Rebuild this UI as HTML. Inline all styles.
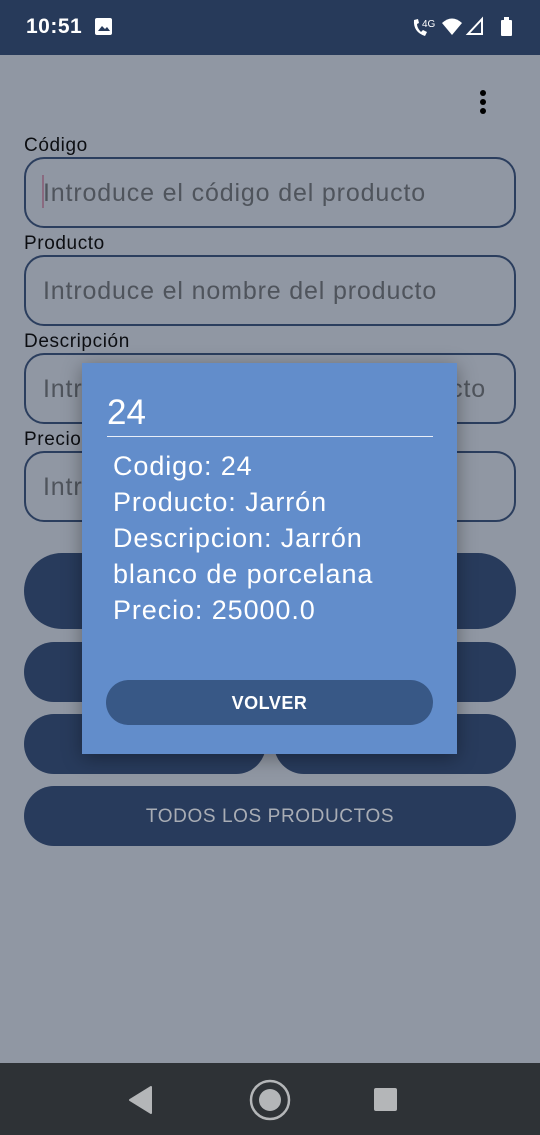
<!DOCTYPE html>
<html><head><meta charset="utf-8"><style>
*{margin:0;padding:0;box-sizing:border-box}
body{width:540px;height:1135px;background:#9097a3;position:relative;overflow:hidden;font-family:"Liberation Sans",sans-serif}
.a{position:absolute}
.sb{left:0;top:0;width:540px;height:55px;background:#273a5a}
.lbl{left:24px;font-size:19px;color:#0c0e12;letter-spacing:0.6px}
.inp{left:24px;width:492px;height:71px;border:2.5px solid #2b3e5e;border-radius:20px;font-size:25px;color:#4f545c;padding-left:17px;line-height:68px;white-space:nowrap;overflow:hidden;letter-spacing:0.85px}
.btn{background:#283b5c;border-radius:32px}
.nav{left:0;top:1063px;width:540px;height:72px;background:#2e3236}
.dlg{left:82px;top:363px;width:375px;height:391px;background:#628dcb;box-shadow:0 4px 18px rgba(0,0,0,.35)}
.dt{color:#fff;font-size:27px;line-height:36px;letter-spacing:0.9px}
</style></head><body>
<div class="a sb"></div>
<div class="a" style="left:26px;top:15px;color:#fff;font-size:21px;font-weight:bold;letter-spacing:0.5px">10:51</div>
<div class="a" style="left:95px;top:18px;width:17px;height:17px;background:#fff;border-radius:2px"></div>
<svg class="a" style="left:96px;top:24px" width="15" height="8"><path d="M2 7 L6 2 L9 5 L11 3 L14 7Z" fill="#273a5a"/></svg>
<svg class="a" style="left:410px;top:14px" width="110" height="26">
<path d="M4 6 Q3 18 15 22 L17 18 L13 16 L11 18 Q7 14 7 10 L9 9 L8 5Z" fill="#fff"/>
<text x="12" y="13" font-size="10" fill="#fff" font-family="Liberation Sans">4G</text>
<path d="M32 9 Q42 0 52 9 L42 21Z" fill="#fff"/>
<path d="M72 20 L72 5 L58 20Z" fill="none" stroke="#fff" stroke-width="2"/>
<rect x="91" y="6" width="11" height="16" rx="1" fill="#fff"/><rect x="94" y="3" width="5" height="3" fill="#fff"/>
</svg>
<div class="a" style="left:480px;top:90px;width:6px;height:6px;border-radius:3px;background:#000"></div>
<div class="a" style="left:480px;top:99px;width:6px;height:6px;border-radius:3px;background:#000"></div>
<div class="a" style="left:480px;top:108px;width:6px;height:6px;border-radius:3px;background:#000"></div>

<div class="a lbl" style="top:135px">Código</div>
<div class="a inp" style="top:157px">Introduce el código del producto</div>
<div class="a" style="left:42px;top:175px;width:2px;height:33px;background:#8a6a80"></div>
<div class="a lbl" style="top:233px">Producto</div>
<div class="a inp" style="top:255px">Introduce el nombre del producto</div>
<div class="a lbl" style="top:331px">Descripción</div>
<div class="a inp" style="top:353px">Intr<span style="position:absolute;right:28px">cto</span></div>
<div class="a lbl" style="top:429px">Precio</div>
<div class="a inp" style="top:451px">Introduce el precio</div>

<div class="a btn" style="left:24px;top:553px;width:492px;height:76px;border-radius:38px"></div>
<div class="a btn" style="left:24px;top:642px;width:492px;height:60px"></div>
<div class="a btn" style="left:24px;top:714px;width:242px;height:60px"></div>
<div class="a btn" style="left:274px;top:714px;width:242px;height:60px"></div>
<div class="a btn" style="left:24px;top:786px;width:492px;height:60px;color:#a9adb5;font-size:19px;text-align:center;line-height:62px;letter-spacing:0.6px">TODOS LOS PRODUCTOS</div>

<div class="a dlg">
<div class="a" style="left:25px;top:30px;color:#fff;font-size:35px">24</div>
<div class="a" style="left:25px;top:73px;width:326px;height:1px;background:#e8eef8"></div>
<div class="a dt" style="left:31px;top:85px">Codigo: 24<br>Producto: Jarrón<br>Descripcion: Jarrón<br>blanco de porcelana<br>Precio: 25000.0</div>
<div class="a" style="left:24px;top:317px;width:327px;height:45px;background:#385886;border-radius:23px;color:#fff;font-weight:bold;font-size:18px;text-align:center;line-height:47px;letter-spacing:0.5px">VOLVER</div>
</div>

<div class="a nav"></div>
<svg class="a" style="left:120px;top:1075px" width="300" height="50">
<path d="M10 25 L31 12 L31 38Z" fill="#b4b6b8" stroke="#b4b6b8" stroke-width="2" stroke-linejoin="round"/>
<circle cx="150" cy="25" r="19" fill="none" stroke="#b4b6b8" stroke-width="2.5"/>
<circle cx="150" cy="25" r="11" fill="#b4b6b8"/>
<rect x="254" y="13" width="23" height="23" rx="2" fill="#b4b6b8"/>
</svg>
</body></html>
